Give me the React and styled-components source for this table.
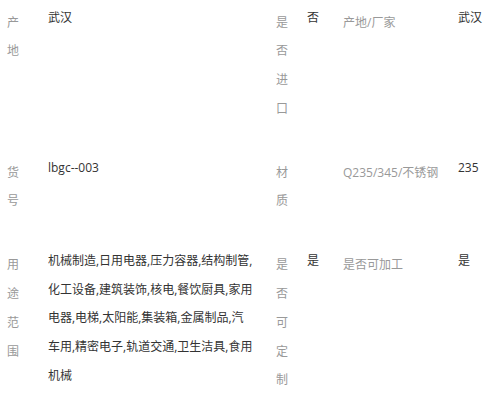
import React from 'react';
import styled, { createGlobalStyle } from 'styled-components';

const GlobalStyle = createGlobalStyle`
  html, body {
    margin: 0;
    padding: 0;
    background: #fff;
  }
  body {
    font-family: "Open Sans", "Noto Sans CJK SC", sans-serif;
    font-size: 12px;
  }
`;

const Sheet = styled.div`
  width: 489px;
  padding: 4px 0 0 7px;
  box-sizing: border-box;
`;

const Row = styled.div`
  display: grid;
  grid-template-columns: 41px 228px 31px 36px 115px 1fr;
  align-items: start;
  line-height: 28.8px;
  padding-bottom: ${p => p.$gap}px;
`;

const Label = styled.div`
  color: #999;
  padding-top: 4.5px;
  width: ${p => (p.$narrow ? '14px' : 'auto')};
`;

const Value = styled.div`
  color: #333;
  padding-right: ${p => (p.$wide ? '22px' : '0')};
`;

const rows = [
  {
    gap: 30.5,
    cells: [
      ['产地', '武汉'],
      ['是否进口', '否'],
      ['产地/厂家', '武汉'],
    ],
  },
  {
    gap: 30.5,
    cells: [
      ['货号', 'lbgc--003'],
      ['材质', ''],
      ['Q235/345/不锈钢', '235'],
    ],
  },
  {
    gap: 0,
    cells: [
      ['用途范围', '机械制造,日用电器,压力容器,结构制管,化工设备,建筑装饰,核电,餐饮厨具,家用电器,电梯,太阳能,集装箱,金属制品,汽车用,精密电子,轨道交通,卫生洁具,食用机械'],
      ['是否可定制', '是'],
      ['是否可加工', '是'],
    ],
  },
];

export default function App() {
  return (
    <>
      <GlobalStyle />
      <Sheet>
        {rows.map((row, i) => (
          <Row key={i} $gap={row.gap}>
            <Label $narrow>{row.cells[0][0]}</Label>
            <Value $wide>{row.cells[0][1]}</Value>
            <Label $narrow>{row.cells[1][0]}</Label>
            <Value>{row.cells[1][1]}</Value>
            <Label>{row.cells[2][0]}</Label>
            <Value>{row.cells[2][1]}</Value>
          </Row>
        ))}
      </Sheet>
    </>
  );
}
